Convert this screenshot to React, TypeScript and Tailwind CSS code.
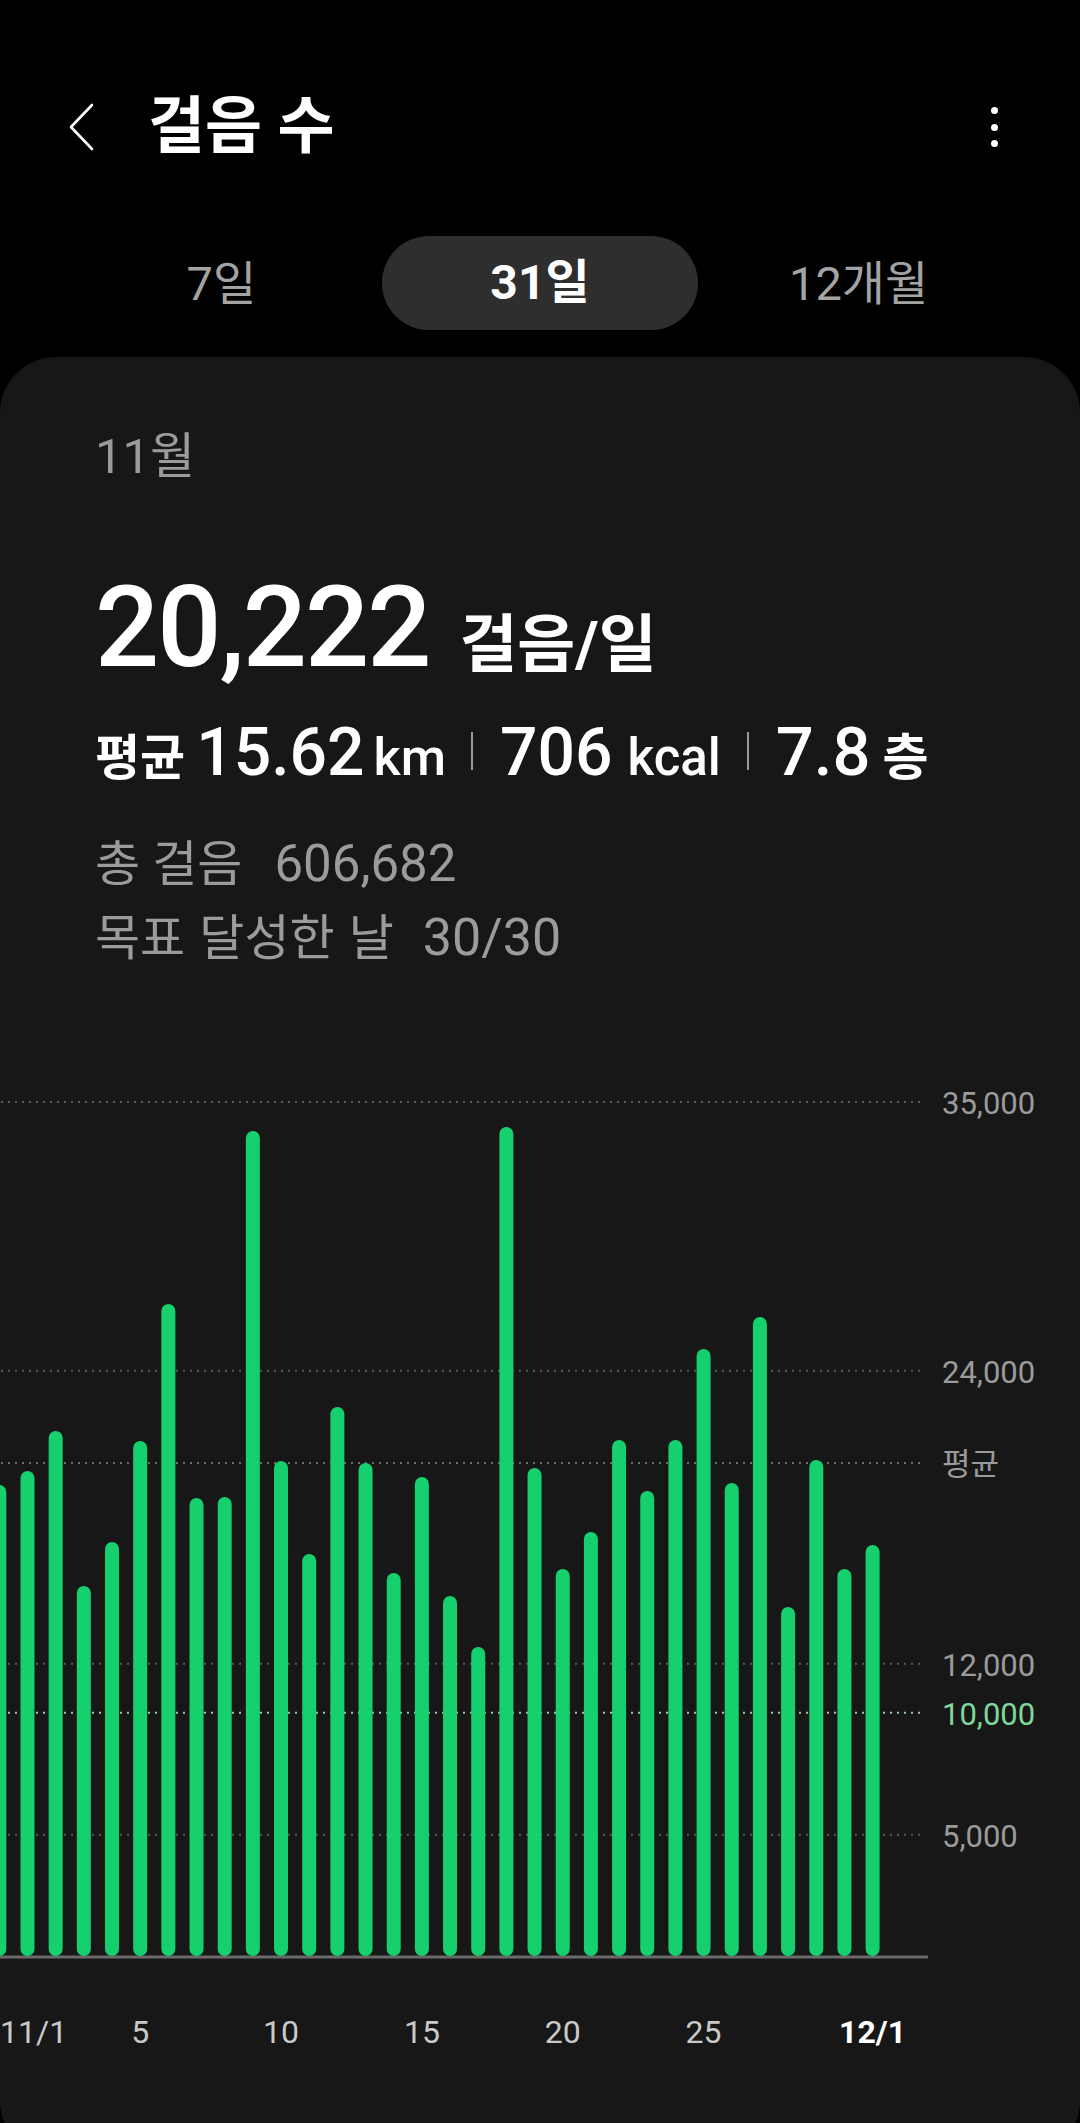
import React from "react";

const tops = [
  1485, 1471, 1431, 1586, 1542, 1441, 1304, 1498, 1497, 1131, 1461, 1554, 1407,
  1463, 1573, 1477, 1596, 1647, 1127, 1468, 1569, 1532, 1440, 1491, 1440, 1349,
  1483, 1317, 1607, 1460, 1569, 1545,
];

const CHART_TOP = 1080;
const BASE = 1957 - CHART_TOP;
const PER_K = 24.43;
const yFor = (v: number) => BASE - (v / 1000) * PER_K;
const xFor = (i: number) => 27.5 + 28.17 * (i - 1);

const grid = [
  { v: 35000, label: "35,000", color: "#9b9b9b", dot: "#5a5a5a" },
  { v: 24000, label: "24,000", color: "#9b9b9b", dot: "#5a5a5a" },
  { v: 20222, label: "평균", color: "#9b9b9b", dot: "#6a6a6a" },
  { v: 12000, label: "12,000", color: "#9b9b9b", dot: "#5a5a5a" },
  { v: 10000, label: "10,000", color: "#7fd79c", dot: "#9cc8a8" },
  { v: 5000, label: "5,000", color: "#9b9b9b", dot: "#5a5a5a" },
];

const xLabels = [
  { i: 5, t: "5", bold: false },
  { i: 10, t: "10", bold: false },
  { i: 15, t: "15", bold: false },
  { i: 20, t: "20", bold: false },
  { i: 25, t: "25", bold: false },
  { i: 31, t: "12/1", bold: true },
];

function Chart() {
  return (
    <div className="relative mt-[122px] h-[1000px] w-full">
      <svg
        className="absolute left-0 top-0"
        width={1080}
        height={1000}
        viewBox="0 0 1080 1000"
      >
        {grid.map((g) => (
          <line
            key={g.label}
            x1={1}
            x2={924}
            y1={yFor(g.v)}
            y2={yFor(g.v)}
            stroke={g.dot}
            strokeWidth={2}
            strokeDasharray="2 5"
          />
        ))}
        <line x1={0} x2={928} y1={BASE} y2={BASE} stroke="#6a6a6a" strokeWidth={3} />
        {tops.map((t, idx) => {
          const x = xFor(idx);
          const top = t - CHART_TOP;
          return (
            <line
              key={idx}
              x1={x}
              x2={x}
              y1={top + 7}
              y2={BASE - 8}
              stroke="#15d06d"
              strokeWidth={14}
              strokeLinecap="round"
            />
          );
        })}
      </svg>
      {grid.map((g) => (
        <span
          key={g.label}
          className="absolute left-[942px] h-[40px] text-[31px] leading-[40px]"
          style={{ top: yFor(g.v) - 18, color: g.color }}
        >
          {g.label}
        </span>
      ))}
      <span className="absolute left-0 top-[932px] text-[32px] leading-[40px] text-[#c9c9c9]">
        11/1
      </span>
      {xLabels.map((l) => (
        <span
          key={l.t}
          className={
            l.bold
              ? "absolute w-[100px] text-center text-[32px] font-bold leading-[40px] text-white"
              : "absolute w-[100px] text-center text-[32px] leading-[40px] text-[#c9c9c9]"
          }
          style={{ left: xFor(l.i) - 50, top: 932 }}
        >
          {l.t}
        </span>
      ))}
    </div>
  );
}

export default function App() {
  return (
    <div className="w-[1080px] h-[2123px] overflow-hidden bg-black font-[Roboto,'Noto_Sans_CJK_KR',sans-serif] text-white">
      {/* Header */}
      <div className="mt-[80px] flex h-[94px] items-center">
        <div className="ml-[66px] flex h-[50px] w-[30px] items-center justify-center">
          <svg width="28" height="50" viewBox="0 0 28 50" fill="none">
            <path d="M25 3 L4 25 L25 47" stroke="white" strokeWidth="2.6" strokeLinecap="round" strokeLinejoin="round" />
          </svg>
        </div>
        <div className="ml-[52px] text-[62px] font-bold leading-none">걸음 수</div>
        <div className="ml-auto mr-[82px] flex flex-col items-center gap-[9.5px]">
          <div className="h-[7px] w-[7px] rounded-full bg-white" />
          <div className="h-[7px] w-[7px] rounded-full bg-white" />
          <div className="h-[7px] w-[7px] rounded-full bg-white" />
        </div>
      </div>

      {/* Tabs */}
      <div className="mt-[62px] grid h-[94px] grid-cols-3 px-[62px]">
        <div className="flex items-center justify-center text-[47px] leading-none text-[#a3a3a3]">7일</div>
        <div className="mx-[1px] flex items-center justify-center rounded-full bg-[#2e2e2e] text-[48px] font-bold leading-none text-white">
          31일
        </div>
        <div className="flex items-center justify-center text-[47px] leading-none text-[#a3a3a3]">12개월</div>
      </div>

      {/* Card */}
      <div className="mt-[27px] h-[1800px] rounded-[56px] bg-[#171717] pt-[78px]">
        <div className="pl-[95px]">
          <div className="h-[44px] text-[49px] leading-[44px] text-[#9b9b9b]">11월</div>

          <div className="mt-[92px] flex h-[112px] items-baseline">
            <span className="text-[113px] font-medium leading-none tracking-[-2px]">20,222</span>
            <span className="ml-[30px] text-[63px] font-bold leading-none">걸음/일</span>
          </div>

          <div className="mt-[36px] flex h-[64px] items-baseline">
            <span className="text-[49px] font-bold leading-none">평균</span>
            <span className="ml-[11px] text-[66px] font-medium leading-none">15.62</span>
            <span className="ml-[9px] text-[52px] font-medium leading-none">km</span>
            <span className="ml-[25px] h-[38px] w-[2px] self-center bg-[#9a9a9a]" />
            <span className="ml-[27px] text-[66px] font-medium leading-none">706</span>
            <span className="ml-[15px] text-[51px] font-medium leading-none">kcal</span>
            <span className="ml-[26px] h-[38px] w-[2px] self-center bg-[#9a9a9a]" />
            <span className="ml-[27px] text-[67px] font-medium leading-none">7.8</span>
            <span className="ml-[12px] text-[50px] font-bold leading-none">층</span>
          </div>

          <div className="mt-[55px] flex h-[46px] items-baseline text-[#9b9b9b]">
            <span className="text-[49px] leading-none">총 걸음</span>
            <span className="ml-[32px] text-[51px] leading-none">606,682</span>
          </div>
          <div className="mt-[28px] flex h-[46px] items-baseline text-[#9b9b9b]">
            <span className="text-[49px] leading-none [word-spacing:2px]">목표 달성한 날</span>
            <span className="ml-[29px] text-[52px] leading-none">30/30</span>
          </div>
        </div>

        <Chart />
      </div>
    </div>
  );
}
